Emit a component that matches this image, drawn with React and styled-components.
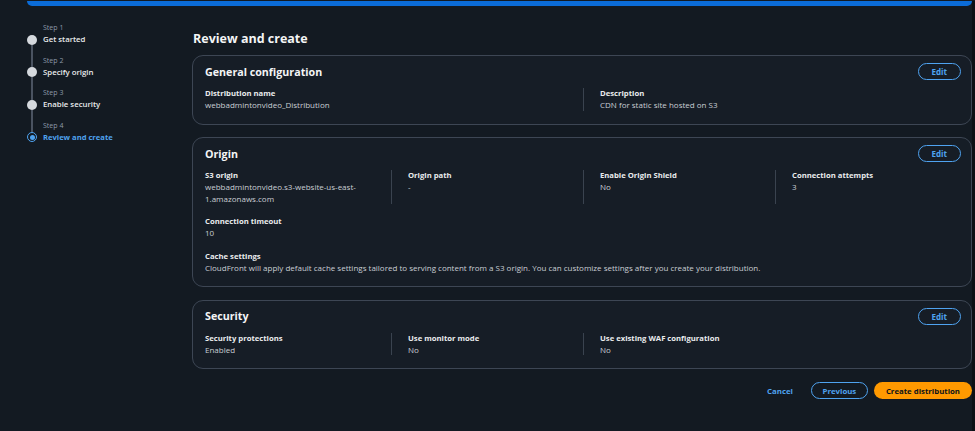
import styled, { createGlobalStyle } from "styled-components";

const colors = {
  pageBg: "#131a22",
  cardBg: "#161d26",
  border: "#3d4654",
  divider: "#3a434f",
  text: "#e9ebed",
  value: "#c9ced4",
  muted: "#8d99a8",
  link: "#4fa3f0",
  banner: "#0b6cd8",
  orange: "#ff9900",
};

const GlobalStyle = createGlobalStyle`
  html, body {
    margin: 0;
    background-color: ${colors.pageBg};
  }

  body {
    font-family: "Open Sans", "Noto Sans", sans-serif;
    color: ${colors.text};
  }
`;

const Shell = styled.div`
  min-height: 431px;
  border-right: 3px solid #0c1015;
  box-sizing: border-box;
`;

const Banner = styled.div`
  height: 5px;
  margin: 1px 0 0 27px;
  background-color: ${colors.banner};
  border-radius: 0 0 8px 8px;
`;

const Layout = styled.div`
  display: grid;
  grid-template-columns: 192px 1fr;
`;

const StepNav = styled.ol`
  list-style: none;
  margin: 0;
  padding: 16px 0 0 27px;
`;

const StepItem = styled.li`
  display: grid;
  grid-template-columns: 10px 1fr;
  grid-template-rows: 11px 13px;
  align-content: start;
  column-gap: 6px;
  height: 32.5px;
`;

const StepNumber = styled.span`
  grid-column: 2;
  font-size: 7px;
  line-height: 11px;
  color: ${colors.muted};
`;

const StepDot = styled.span`
  grid-column: 1;
  grid-row: 2;
  position: relative;
  align-self: center;
  width: 10px;
  height: 10px;
  box-sizing: border-box;
  border-radius: 50%;
  background-color: ${({ $active }) => ($active ? "transparent" : "#d5d9de")};
  border: ${({ $active }) => ($active ? `1.5px solid ${colors.link}` : "none")};

  &::before {
    content: "";
    display: ${({ $active }) => ($active ? "block" : "none")};
    position: absolute;
    inset: 1.5px;
    border-radius: 50%;
    background-color: ${colors.link};
  }

  &::after {
    content: "";
    display: ${({ $last }) => ($last ? "none" : "block")};
    position: absolute;
    left: 4.25px;
    top: 10px;
    width: 1.5px;
    height: 22.5px;
    background-color: #4a5361;
  }
`;

const StepTitle = styled.span`
  grid-column: 2;
  grid-row: 2;
  font-size: ${({ $active }) => ($active ? "7.6px" : "7.8px")};
  line-height: 13px;
  font-weight: ${({ $active }) => ($active ? 700 : 600)};
  color: ${({ $active }) => ($active ? colors.link : colors.text)};
`;

const Main = styled.main`
  display: flex;
  flex-direction: column;
  padding-top: 24px;
`;

const PageTitle = styled.h1`
  margin: 0 0 8px 1px;
  font-size: 12.5px;
  line-height: 17px;
  font-weight: 700;
  color: #f4f5f6;
`;

const Cards = styled.div`
  display: flex;
  flex-direction: column;
  gap: 12.5px;
`;

const Card = styled.section`
  background-color: ${colors.cardBg};
  border: 1px solid ${colors.border};
  border-radius: 11px;
  padding: 7px 10px 13px 12px;
`;

const CardHeader = styled.div`
  display: flex;
  align-items: center;
  justify-content: space-between;
  height: 17px;
  margin-bottom: 8px;
`;

const CardTitle = styled.h2`
  margin: 0;
  font-size: 10.7px;
  font-weight: 700;
  color: #f4f5f6;
`;

const OutlineButton = styled.button`
  height: 17px;
  padding: 0 ${({ $wide }) => ($wide ? "9px" : "13px")};
  min-width: ${({ $wide }) => ($wide ? "57px" : "42px")};
  border: 1.5px solid ${colors.link};
  border-radius: 10px;
  background: transparent;
  color: ${colors.link};
  font-family: inherit;
  font-size: ${({ $wide }) => ($wide ? "7.8px" : "8px")};
  font-weight: 700;
  cursor: pointer;
`;

const Grid = styled.div`
  display: grid;
  grid-template-columns: 186px 192px 192px 1fr;
  row-gap: 12px;
`;

const Field = styled.div`
  grid-column: span ${({ $span }) => $span || 1};
  padding-left: ${({ $divided }) => ($divided ? "16px" : "0")};
  border-left: ${({ $divided }) =>
    $divided ? `1px solid ${colors.divider}` : "none"};
`;

const Label = styled.div`
  font-size: 7.7px;
  line-height: 11px;
  font-weight: 700;
  color: ${colors.text};
`;

const Value = styled.div`
  font-size: 8px;
  line-height: 11.5px;
  color: ${colors.value};
`;

const Actions = styled.div`
  display: flex;
  justify-content: flex-end;
  align-items: center;
  gap: 6px;
  margin-top: 13px;
`;

const TextButton = styled.button`
  height: 17px;
  padding: 0 12px;
  border: none;
  background: transparent;
  color: ${colors.link};
  font-family: inherit;
  font-size: 7.8px;
  font-weight: 700;
  cursor: pointer;
`;

const PrimaryButton = styled.button`
  height: 17px;
  padding: 0 12px;
  border: none;
  border-radius: 10px;
  background-color: ${colors.orange};
  color: #0f141a;
  font-family: inherit;
  font-size: 7.8px;
  font-weight: 700;
  cursor: pointer;
`;

const steps = ["Get started", "Specify origin", "Enable security", "Review and create"];

const Item = ({ label, value, span, divided }) => (
  <Field $span={span} $divided={divided}>
    <Label>{label}</Label>
    <Value>{value}</Value>
  </Field>
);

const App = () => {
  return (
    <Shell>
      <GlobalStyle />
      <Banner />
      <Layout>
        <StepNav>
          {steps.map((title, i) => {
            const active = i === steps.length - 1;
            return (
              <StepItem key={title}>
                <StepNumber>Step {i + 1}</StepNumber>
                <StepDot $active={active} $last={active} />
                <StepTitle $active={active}>{title}</StepTitle>
              </StepItem>
            );
          })}
        </StepNav>
        <Main>
          <PageTitle>Review and create</PageTitle>
          <Cards>
            <Card>
              <CardHeader>
                <CardTitle>General configuration</CardTitle>
                <OutlineButton>Edit</OutlineButton>
              </CardHeader>
              <Grid>
                <Item
                  span={2}
                  label="Distribution name"
                  value="webbadmintonvideo_Distribution"
                />
                <Item
                  span={2}
                  divided
                  label="Description"
                  value="CDN for static site hosted on S3"
                />
              </Grid>
            </Card>
            <Card>
              <CardHeader>
                <CardTitle>Origin</CardTitle>
                <OutlineButton>Edit</OutlineButton>
              </CardHeader>
              <Grid>
                <Item
                  label="S3 origin"
                  value={
                    <>
                      webbadmintonvideo.s3-website-us-east-
                      <br />
                      1.amazonaws.com
                    </>
                  }
                />
                <Item divided label="Origin path" value="-" />
                <Item divided label="Enable Origin Shield" value="No" />
                <Item divided label="Connection attempts" value="3" />
                <Item span={4} label="Connection timeout" value="10" />
                <Item
                  span={4}
                  label="Cache settings"
                  value="CloudFront will apply default cache settings tailored to serving content from a S3 origin. You can customize settings after you create your distribution."
                />
              </Grid>
            </Card>
            <Card>
              <CardHeader>
                <CardTitle>Security</CardTitle>
                <OutlineButton>Edit</OutlineButton>
              </CardHeader>
              <Grid>
                <Item label="Security protections" value="Enabled" />
                <Item divided label="Use monitor mode" value="No" />
                <Item
                  span={2}
                  divided
                  label="Use existing WAF configuration"
                  value="No"
                />
              </Grid>
            </Card>
          </Cards>
          <Actions>
            <TextButton>Cancel</TextButton>
            <OutlineButton $wide>Previous</OutlineButton>
            <PrimaryButton>Create distribution</PrimaryButton>
          </Actions>
        </Main>
      </Layout>
    </Shell>
  );
};

export default App;
